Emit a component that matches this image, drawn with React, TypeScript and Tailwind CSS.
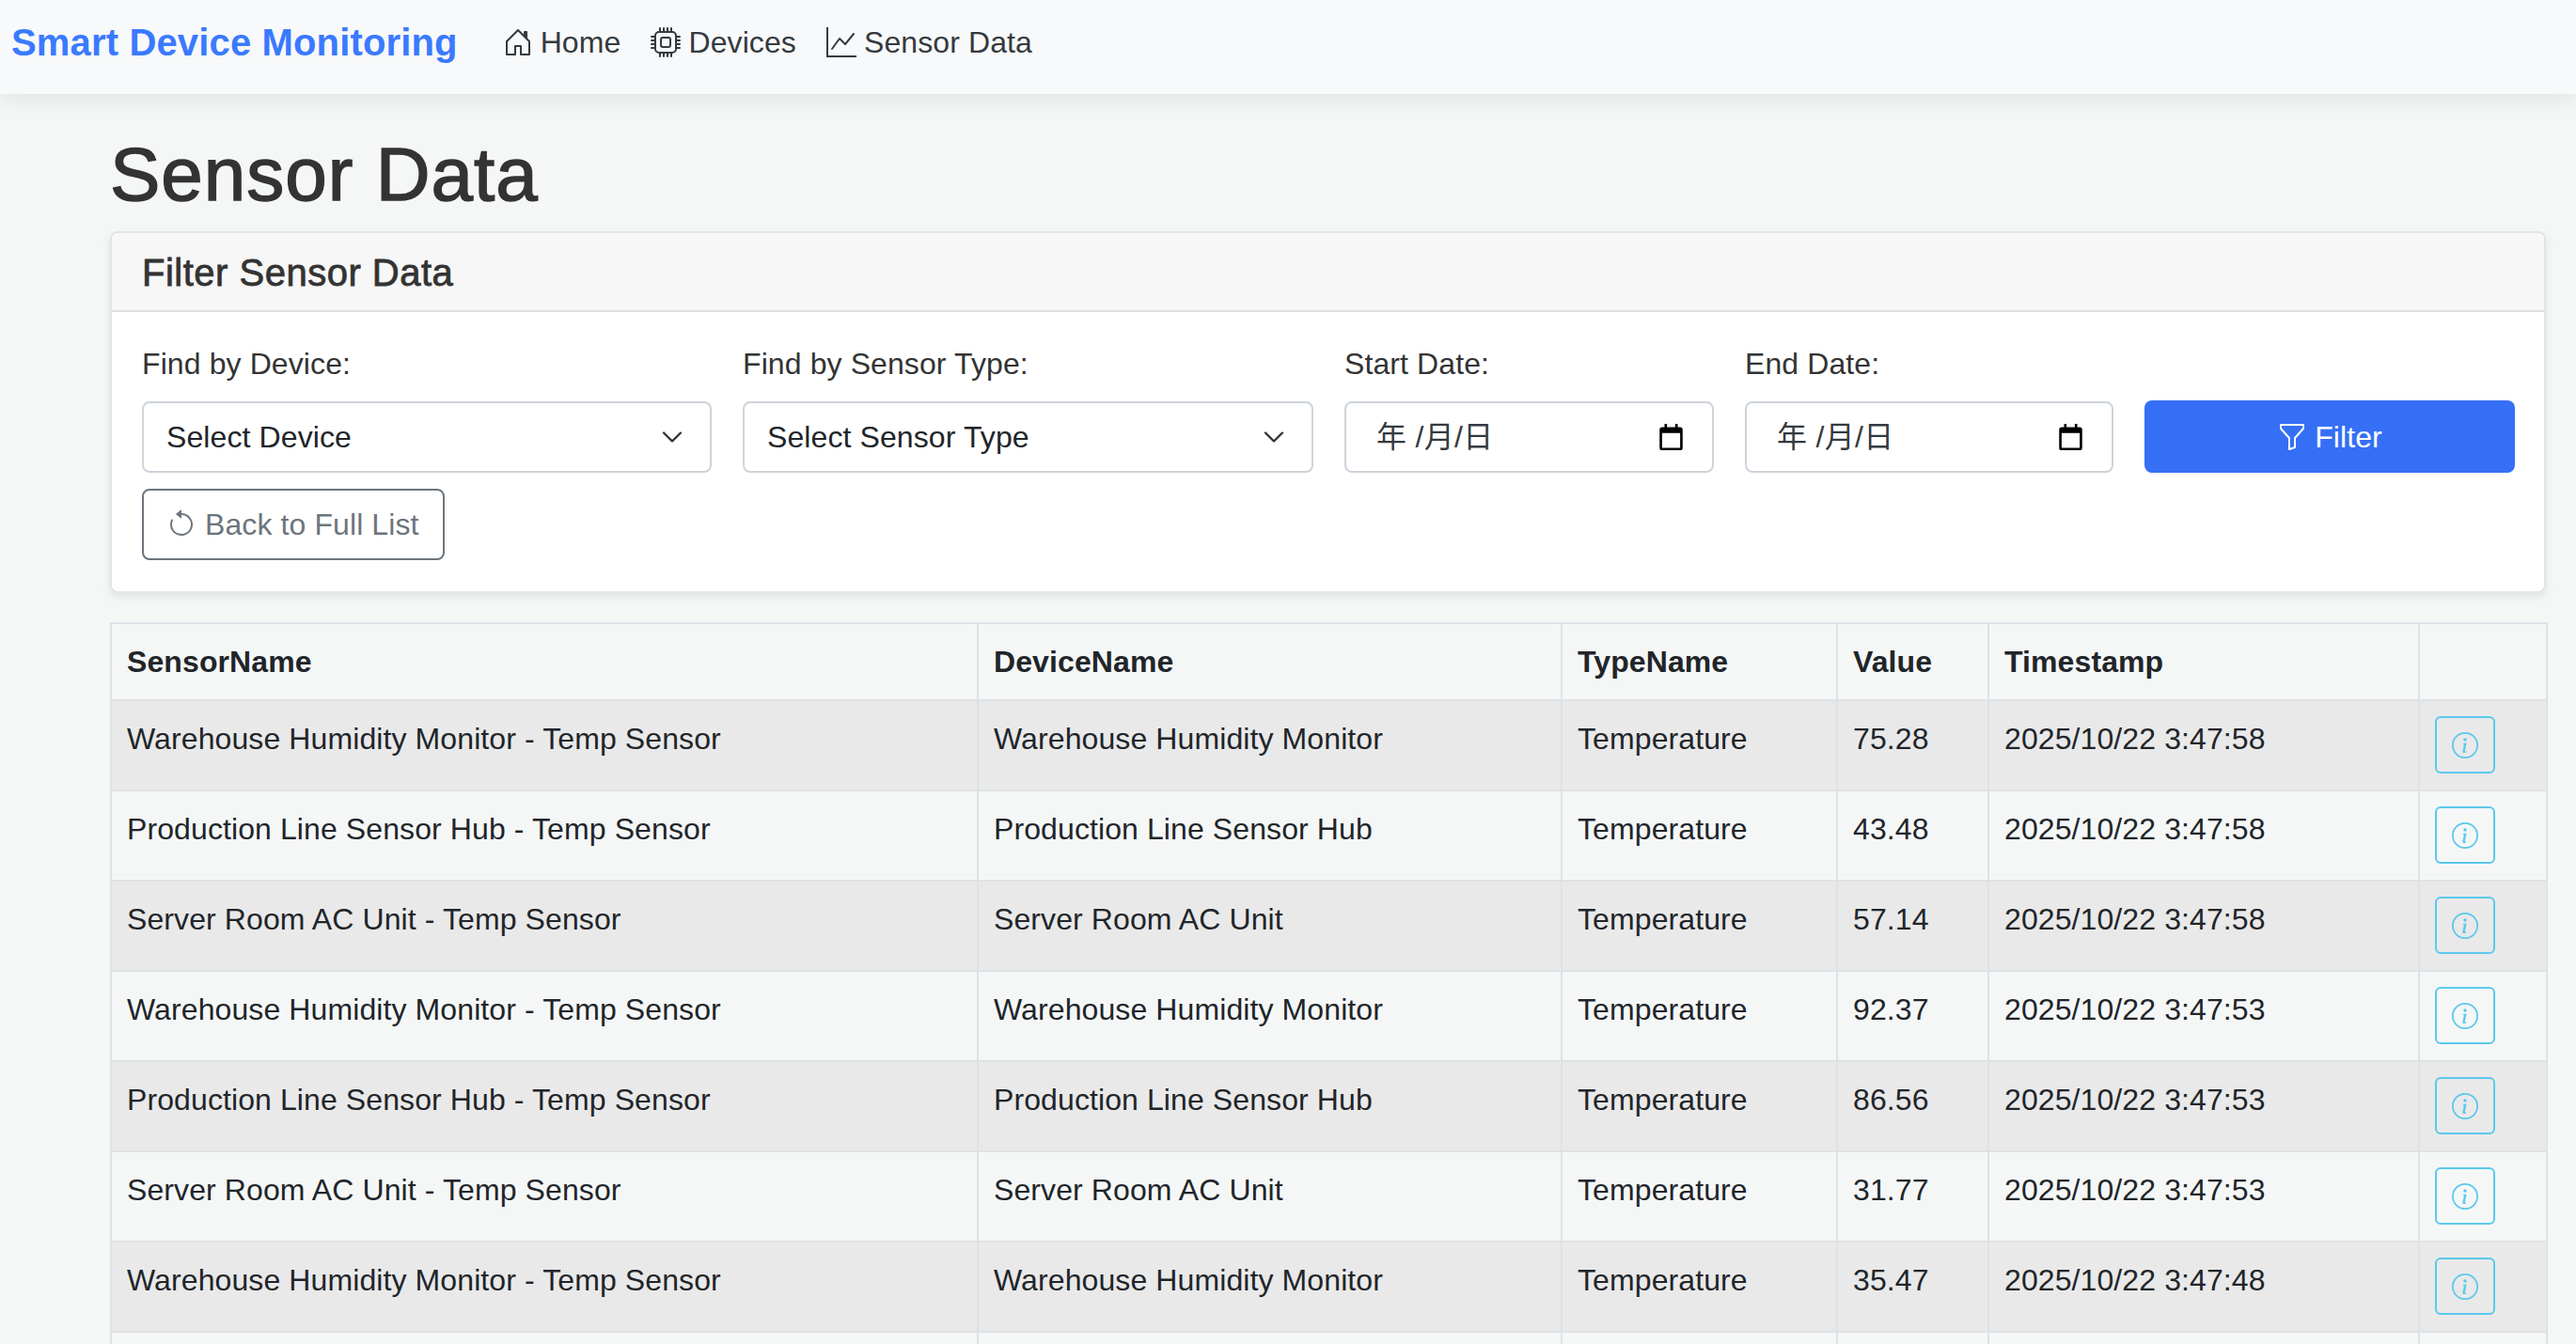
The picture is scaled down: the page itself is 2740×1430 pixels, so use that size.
import {
  BsArrowCounterclockwise,
  BsChevronDown,
  BsCpu,
  BsFunnel,
  BsGraphUp,
  BsHouseDoor,
  BsInfoCircle,
} from "react-icons/bs";

const ROWS = [
  ["Warehouse Humidity Monitor - Temp Sensor", "Warehouse Humidity Monitor", "75.28", "2025/10/22 3:47:58"],
  ["Production Line Sensor Hub - Temp Sensor", "Production Line Sensor Hub", "43.48", "2025/10/22 3:47:58"],
  ["Server Room AC Unit - Temp Sensor", "Server Room AC Unit", "57.14", "2025/10/22 3:47:58"],
  ["Warehouse Humidity Monitor - Temp Sensor", "Warehouse Humidity Monitor", "92.37", "2025/10/22 3:47:53"],
  ["Production Line Sensor Hub - Temp Sensor", "Production Line Sensor Hub", "86.56", "2025/10/22 3:47:53"],
  ["Server Room AC Unit - Temp Sensor", "Server Room AC Unit", "31.77", "2025/10/22 3:47:53"],
  ["Warehouse Humidity Monitor - Temp Sensor", "Warehouse Humidity Monitor", "35.47", "2025/10/22 3:47:48"],
];

function NavLink({ icon, label }: { icon: React.ReactNode; label: string }) {
  return (
    <a className="flex items-center gap-[8px] text-[32px] leading-[48px] text-[#343a40]">
      {icon}
      {label}
    </a>
  );
}

function SelectBox({ label }: { label: string }) {
  return (
    <div className="flex h-[76px] items-center justify-between rounded-[8px] border-2 border-[#ced4da] bg-white pl-[24px] pr-[28px] text-[#212529]">
      <span>{label}</span>
      <BsChevronDown className="size-[24px] stroke-[0.6px]" />
    </div>
  );
}

function CalendarIcon() {
  return (
    <svg viewBox="0 0 28 32" className="h-[28px] w-[25px]" fill="black">
      <path d="M6 0h3v4h10V0h3v4h3a3 3 0 0 1 3 3v22a3 3 0 0 1-3 3H3a3 3 0 0 1-3-3V7a3 3 0 0 1 3-3h3zM3 11v18h22V11z" />
    </svg>
  );
}

function DateBox() {
  return (
    <div className="flex h-[76px] items-center justify-between rounded-[8px] border-2 border-[#ced4da] bg-white pl-[32px] pr-[31px] text-[#343a40]">
      <span className="tracking-[0.3px]">年 /月/日</span>
      <CalendarIcon />
    </div>
  );
}

function Label({ children }: { children: string }) {
  return <label className="mb-[16px] block leading-[48px] text-[#333333]">{children}</label>;
}

export default function App() {
  return (
    <div className="h-[1430px] overflow-hidden bg-[#f5f7f7] font-['Liberation_Sans','Noto_Sans_CJK_SC',sans-serif] text-[32px] leading-[48px] tracking-[0.1px] text-[#333333]">
      <nav className="flex h-[100px] items-center bg-[#f8f9fa] pb-[10px] pl-[12px] shadow-[0_6px_20px_rgba(0,0,0,0.08)]">
        <a className="mr-[48px] text-[40px] font-bold tracking-[0.15px] text-[#3a7afe]">Smart Device Monitoring</a>
        <div className="flex gap-[32px]">
          <NavLink icon={<BsHouseDoor className="size-[32px]" />} label="Home" />
          <NavLink icon={<BsCpu className="size-[32px]" />} label="Devices" />
          <NavLink icon={<BsGraphUp className="size-[32px]" />} label="Sensor Data" />
        </div>
      </nav>

      <main className="pl-[117px] pr-[32px]">
        <h1 className="mb-[12px] mt-[38px] text-[80px] font-normal leading-[96px] tracking-[1px] text-[#333333] [-webkit-text-stroke:1.5px_#333333]">
          Sensor Data
        </h1>

        <section className="mb-[31px] overflow-hidden rounded-[8px] border-2 border-[#e3e4e5] bg-white shadow-[0_4px_8px_rgba(0,0,0,0.08)]">
          <h2 className="border-b-2 border-[#dfe0e1] bg-[#f7f7f7] px-[32px] pb-[16px] pt-[18px] text-[40px] font-normal leading-[48px] tracking-[0.5px] [-webkit-text-stroke:0.8px_#333333]">
            Filter Sensor Data
          </h2>
          <div className="px-[32px] pb-[33px] pt-[31px]">
            <div className="grid grid-cols-[606px_607px_393px_392px_394px] items-end gap-x-[33px]">
              <div>
                <Label>Find by Device:</Label>
                <SelectBox label="Select Device" />
              </div>
              <div>
                <Label>Find by Sensor Type:</Label>
                <SelectBox label="Select Sensor Type" />
              </div>
              <div>
                <Label>Start Date:</Label>
                <DateBox />
              </div>
              <div>
                <Label>End Date:</Label>
                <DateBox />
              </div>
              <button className="flex h-[77px] items-center justify-center gap-[8px] rounded-[8px] bg-[#356ff6] text-white">
                <BsFunnel className="size-[32px]" />
                Filter
              </button>
            </div>
            <button className="mt-[17px] flex h-[76px] items-center gap-[9px] rounded-[8px] border-2 border-[#6c757d] bg-white pl-[24px] pr-[25px] text-[#6c757d]">
              <BsArrowCounterclockwise className="size-[32px]" />
              Back to Full List
            </button>
          </div>
        </section>

        <table className="w-[2591px] table-fixed border-collapse text-[#212529]">
          <colgroup>
            <col className="w-[922px]" />
            <col className="w-[621px]" />
            <col className="w-[293px]" />
            <col className="w-[161px]" />
            <col className="w-[458px]" />
            <col className="w-[136px]" />
          </colgroup>
          <thead>
            <tr className="h-[82px]">
              {["SensorName", "DeviceName", "TypeName", "Value", "Timestamp", ""].map((h, i) => (
                <th key={i} className="border-2 border-[#dee2e6] p-[16px] text-left align-top font-bold">
                  {h}
                </th>
              ))}
            </tr>
          </thead>
          <tbody>
            {ROWS.map((r, i) => (
              <tr key={i} className={i % 2 === 0 ? "h-[96px] bg-[#e9e9e9]" : "h-[96px]"}>
                <td className="border-2 border-[#dee2e6] px-[16px] pt-[16px] align-top">{r[0]}</td>
                <td className="border-2 border-[#dee2e6] px-[16px] pt-[16px] align-top">{r[1]}</td>
                <td className="border-2 border-[#dee2e6] px-[16px] pt-[16px] align-top">Temperature</td>
                <td className="border-2 border-[#dee2e6] px-[16px] pt-[16px] align-top">{r[2]}</td>
                <td className="border-2 border-[#dee2e6] px-[16px] pt-[16px] align-top">{r[3]}</td>
                <td className="border-2 border-[#dee2e6] px-[16px] pt-[16px] align-top">
                  <button className="flex h-[61px] w-[64px] items-center justify-center rounded-[6px] border-2 border-[#5bc8ec] text-[#5bc8ec]">
                    <BsInfoCircle className="size-[28px]" />
                  </button>
                </td>
              </tr>
            ))}
            {/* next row only starts at the fold, its content is below the screenshot */}
            <tr className="h-[96px]">
              {[0, 1, 2, 3, 4, 5].map((i) => (
                <td key={i} className="border-2 border-[#dee2e6]" />
              ))}
            </tr>
          </tbody>
        </table>
      </main>
    </div>
  );
}
